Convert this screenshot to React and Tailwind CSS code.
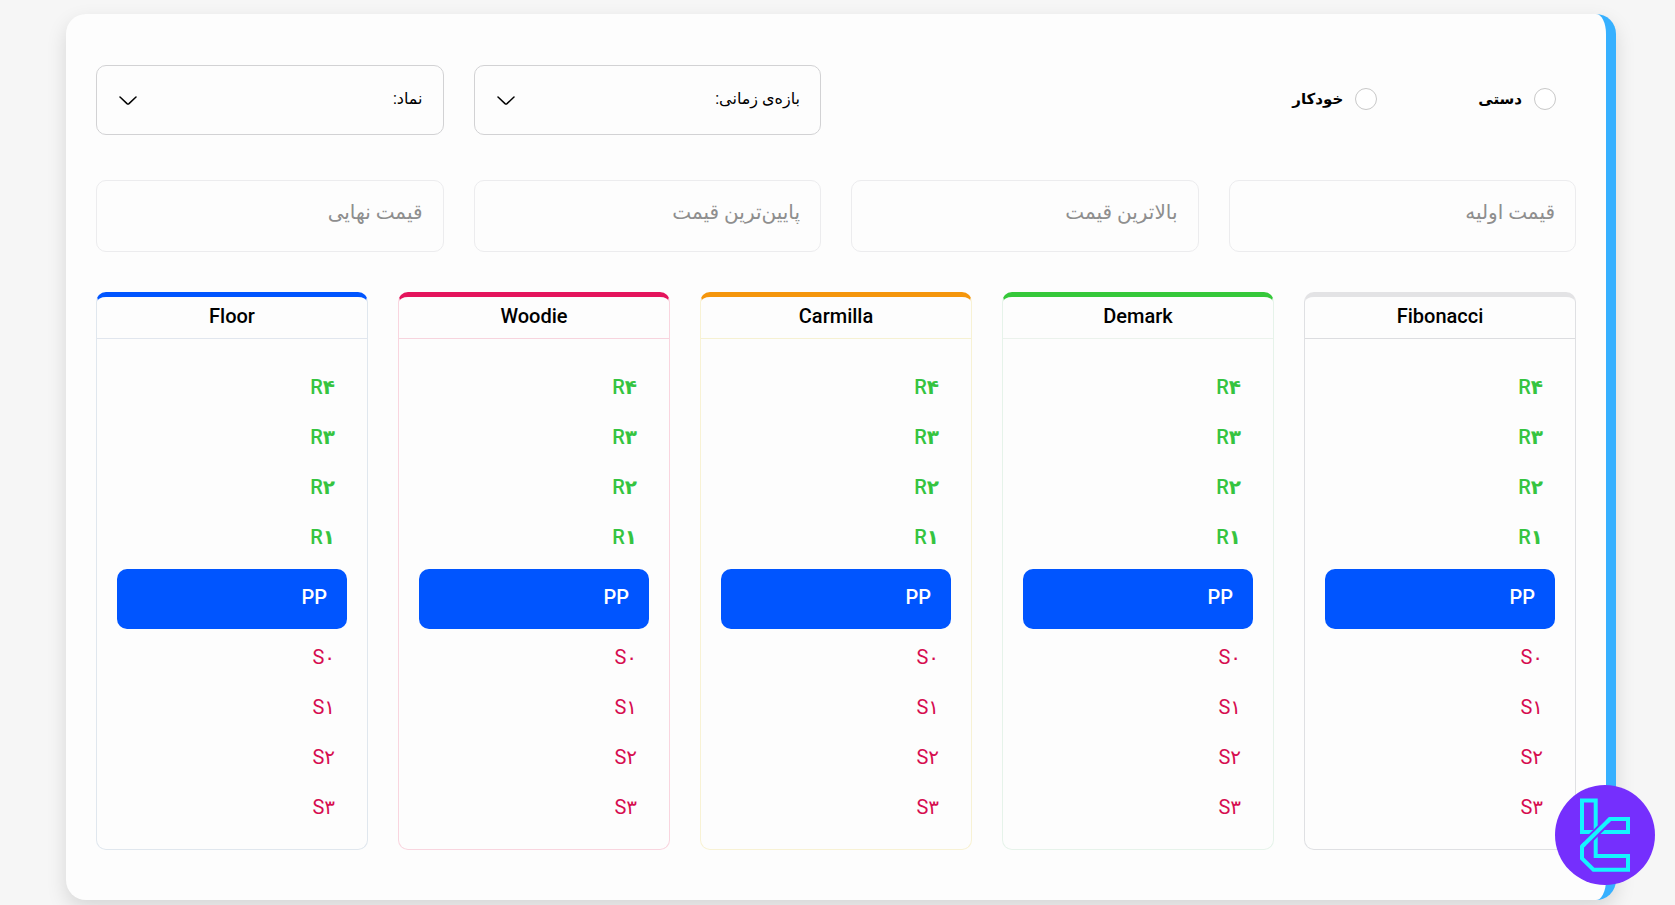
import React, { useState } from 'react';

const timeframes = ['M15', 'H1', 'H4', 'D1'];
const symbols = ['EURUSD', 'GBPUSD', 'XAUUSD'];

const prices = [
  { name: 'open', label: 'قیمت اولیه' },
  { name: 'high', label: 'بالاترین قیمت' },
  { name: 'low', label: 'پایین‌ترین قیمت' },
  { name: 'close', label: 'قیمت نهایی' },
];

const methods = [
  { name: 'Fibonacci', border: 'border-[#dfe0e3] border-t-[#e3e3e5]', line: 'border-[#dcdde0]' },
  { name: 'Demark', border: 'border-[#e6f3ea] border-t-[#35c83a]', line: 'border-[#ebf2ec]' },
  { name: 'Carmilla', border: 'border-[#f8f2d4] border-t-[#f5960c]', line: 'border-[#f6f1d2]' },
  { name: 'Woodie', border: 'border-[#f9d5df] border-t-[#e4145c]', line: 'border-[#f7d4de]' },
  { name: 'Floor', border: 'border-[#e0e7ee] border-t-[#0055ff]', line: 'border-[#e1e6ee]' },
];

const resistances = ['۴', '۳', '۲', '۱'];
const supports = ['۰', '۱', '۲', '۳'];

function ModeRadio({ value, label, mode, onChange }) {
  return (
    <label className="flex items-center gap-3 pr-5 text-[15px] font-bold text-black cursor-pointer">
      <input
        type="radio"
        name="mode"
        value={value}
        checked={mode === value}
        onChange={() => onChange(value)}
        className="appearance-none size-[22px] shrink-0 rounded-full border border-[#c8c8c8] bg-white checked:border-[6px] checked:border-[#0055ff]"
      />
      {label}
    </label>
  );
}

function SelectBox({ label, options }) {
  return (
    <div className="relative">
      <select
        aria-label={label}
        defaultValue=""
        className="appearance-none w-full h-[70px] px-5 pb-[2px] rounded-[10px] border border-[#d2d2d4] bg-transparent text-base text-black outline-none"
      >
        <option value="">{label}</option>
        {options.map((option) => (
          <option key={option} value={option}>{option}</option>
        ))}
      </select>
      <svg viewBox="0 0 18 10" className="absolute left-[23px] top-[31px] w-[18px] h-[10px] pointer-events-none" fill="none" stroke="#000" strokeWidth="1.5" strokeLinecap="round" strokeLinejoin="round">
        <path d="M1 1l7 6.6q1 .8 2 0L17 1" />
      </svg>
    </div>
  );
}

function MethodCard({ method }) {
  return (
    <section className={`border border-t-[5px] rounded-[10px] ${method.border}`}>
      <h2 className={`h-[42px] pb-1 flex items-center justify-center border-b text-xl font-medium text-black ${method.line}`}>
        {method.name}
      </h2>
      <dl className="px-5 pt-[23px] pb-[17px] text-xl font-medium">
        {resistances.map((level) => (
          <div key={level} className="h-[50px] px-3 flex items-center justify-between text-[#35c440]">
            <dt>R<span className="font-bold">{level}</span></dt>
            <dd></dd>
          </div>
        ))}
        <div className="h-[60px] mt-[7px] mb-[3px] px-5 pb-1 flex items-center justify-between rounded-[10px] bg-[#0055ff] text-white">
          <dt>PP</dt>
          <dd></dd>
        </div>
        {supports.map((level) => (
          <div key={level} className="h-[50px] px-3 flex items-center justify-between font-normal text-[#d60d50]">
            <dt>S{level}</dt>
            <dd></dd>
          </div>
        ))}
      </dl>
    </section>
  );
}

function ChatButton() {
  return (
    <button type="button" aria-label="پشتیبانی" className="fixed right-5 bottom-5 size-[100px] rounded-full bg-[#752ffd]">
      <svg viewBox="0 0 100 100" className="size-full" fill="none" stroke="#14f5ff" strokeWidth="4">
        <path d="M41 47H27V15.500H40.700V47" />
        <path d="M42 47H73V34H55L27 61.500V73.500L38.500 84.700H73V71H40.700V49" />
        {/* gap on both sides of the diagonal */}
        <path d="M52 37L30 58.600" stroke="#752ffd" strokeWidth="8" />
        <path d="M55.500 33.500L27 61.500" />
      </svg>
    </button>
  );
}

export default function App() {
  const [mode, setMode] = useState('');
  const [values, setValues] = useState({ open: '', high: '', low: '', close: '' });

  return (
    <div dir="rtl" className="min-h-screen bg-[#f6f6f6] pt-[14px] pb-[5px] pl-[66px] pr-[59px] font-['Roboto','DejaVu_Sans',sans-serif]">
      <main className="px-[30px] pt-[51px] pb-[50px] rounded-[20px] border-r-[10px] border-[#36b0ff] bg-[#fdfdfd] shadow-[0_8px_20px_rgba(0,0,0,0.13)]">
        <div className="grid grid-cols-4 gap-[30px]">
          <div className="col-span-2 grid grid-cols-2 gap-[30px]">
            <div role="radiogroup" className="grid grid-cols-2 gap-[10px] pb-[2px]">
              <ModeRadio value="manual" label="دستی" mode={mode} onChange={setMode} />
              <ModeRadio value="auto" label="خودکار" mode={mode} onChange={setMode} />
            </div>
          </div>
          <SelectBox label="بازه‌ی زمانی:" options={timeframes} />
          <SelectBox label="نماد:" options={symbols} />
        </div>

        <div className="grid grid-cols-4 gap-[30px] mt-[45px]">
          {prices.map((price) => (
            <input
              key={price.name}
              type="text"
              aria-label={price.label}
              placeholder={price.label}
              value={values[price.name]}
              onChange={(e) => setValues({ ...values, [price.name]: e.target.value })}
              className="w-full h-[72px] px-5 pb-2 rounded-[10px] border border-[#ececee] text-xl text-black placeholder:text-[#8e8e8e] outline-none"
            />
          ))}
        </div>

        <div className="grid grid-cols-5 gap-[30px] mt-10">
          {methods.map((method) => (
            <MethodCard key={method.name} method={method} />
          ))}
        </div>
      </main>
      <ChatButton />
    </div>
  );
}
